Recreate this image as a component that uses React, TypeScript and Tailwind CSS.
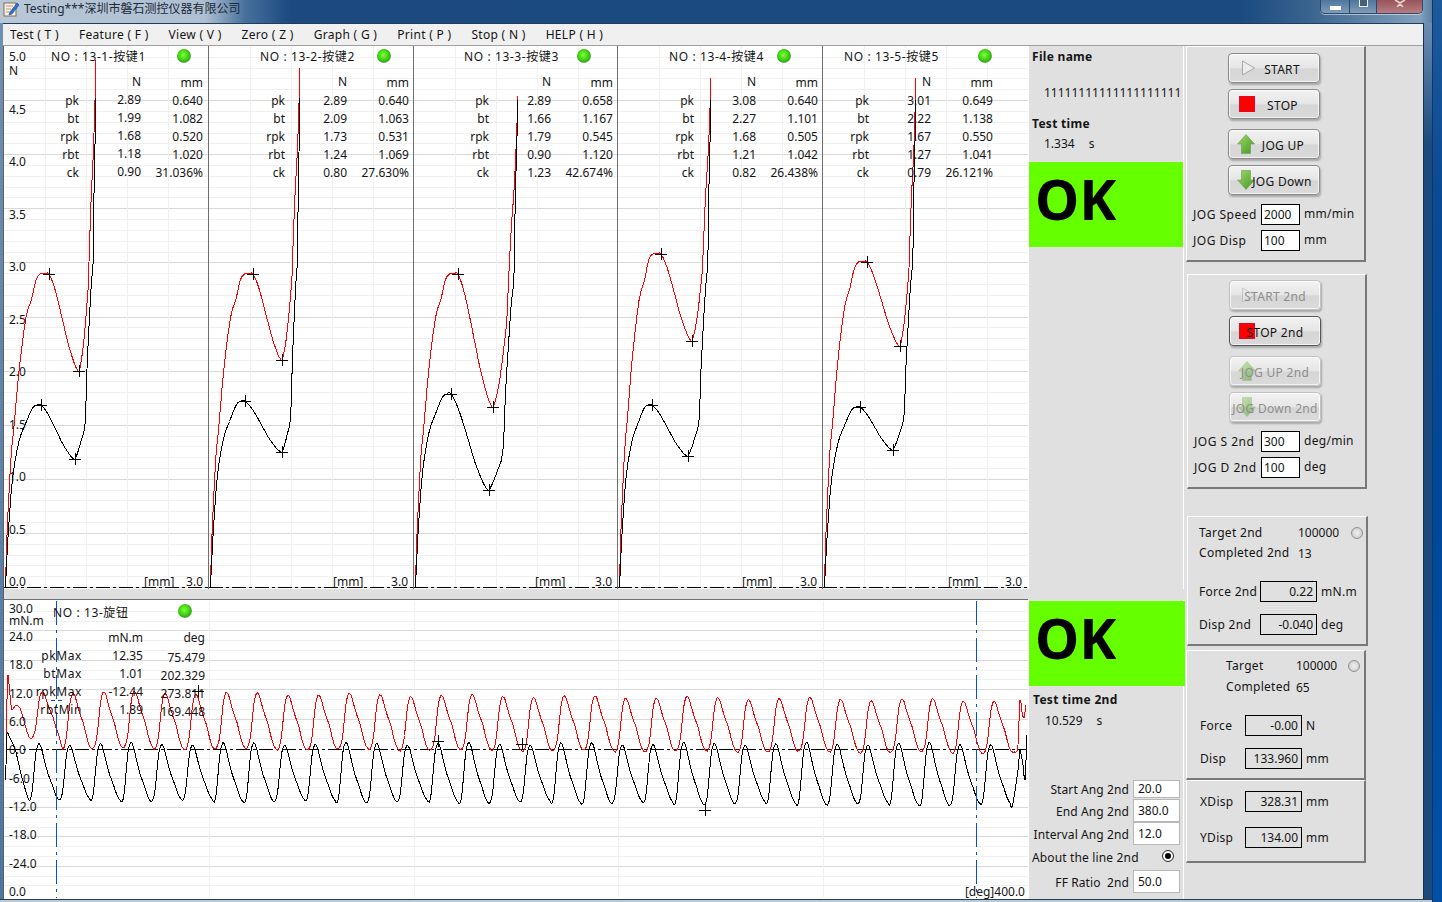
import React from 'react';

type Pt = [number, number];

// Catmull-Rom sampled to a polyline, the original trace looks stair-stepped so no need for beziers
function smooth(pts: Pt[], steps = 3): string {
  const out: string[] = [];
  for (let i = 0; i < pts.length - 1; i++) {
    const p0 = pts[Math.max(0, i - 1)];
    const p1 = pts[i];
    const p2 = pts[i + 1];
    const p3 = pts[Math.min(pts.length - 1, i + 2)];
    for (let s = 0; s < steps; s++) {
      const t = s / steps;
      const t2 = t * t;
      const t3 = t2 * t;
      const x = 0.5 * (2 * p1[0] + (p2[0] - p0[0]) * t + (2 * p0[0] - 5 * p1[0] + 4 * p2[0] - p3[0]) * t2 + (3 * p1[0] - p0[0] - 3 * p2[0] + p3[0]) * t3);
      const y = 0.5 * (2 * p1[1] + (p2[1] - p0[1]) * t + (2 * p0[1] - 5 * p1[1] + 4 * p2[1] - p3[1]) * t2 + (3 * p1[1] - p0[1] - 3 * p2[1] + p3[1]) * t3);
      out.push(`${x.toFixed(1)},${y.toFixed(1)}`);
    }
  }
  const last = pts[pts.length - 1];
  out.push(`${last[0]},${last[1]}`);
  return out.join(' ');
}

const BASE_Y = 587;

const fall: Pt[] = [[0.2, 0.16], [0.47, 0.5], [0.63, 0.71], [0.83, 0.91], [0.93, 0.98]];

function forceCurve(x0: number, pk: Pt, bt: Pt, top: Pt, rise: Pt[], climb: Pt[]): string {
  const pts: Pt[] = [];
  rise.forEach(([dx, f]) => pts.push([x0 + dx * (pk[0] - x0), BASE_Y - f * (BASE_Y - pk[1])]));
  fall.forEach(([t, e]) => pts.push([pk[0] + (bt[0] - pk[0]) * t, pk[1] + (bt[1] - pk[1]) * e]));
  pts.push(bt);
  climb.forEach(([fx, fy]) => pts.push([bt[0] + (top[0] - bt[0]) * fx, bt[1] + (top[1] - bt[1]) * fy]));
  return smooth(pts);
}

const redRise: Pt[] = [[0, 0], [0.03, 0.15], [0.08, 0.3], [0.13, 0.42], [0.2, 0.52], [0.31, 0.69], [0.47, 0.86], [0.6, 0.92], [0.7, 0.98], [0.8, 1], [0.9, 1], [1, 1]];
const redClimb: Pt[] = [[0.12, 0.03], [0.29, 0.1], [0.53, 0.26], [0.59, 0.35], [0.71, 0.55], [0.85, 0.71], [0.94, 0.87], [1, 1]];
const blackRise: Pt[] = [[0, 0], [0.03, 0.12], [0.08, 0.3], [0.2, 0.6], [0.38, 0.8], [0.55, 0.89], [0.75, 0.98], [0.88, 1], [1, 1]];
const blackClimb: Pt[] = [[0.14, 0.02], [0.29, 0.05], [0.48, 0.1], [0.57, 0.25], [0.76, 0.47], [0.86, 0.545], [0.9, 0.72], [1, 1]];

interface PanelData {
  left: number;
  width: number;
  title: string;
  titleX: string;
  ledX: string;
  nameW: string;
  mmX: string;
  rows: [string, string, string][];
  nShift?: boolean;
  redPk: Pt;
  redBt: Pt;
  redTop: Pt;
  blackPk: Pt;
  blackBt: Pt;
  blackTop: Pt;
}

const panels: PanelData[] = [
  {
    left: 4, width: 205, title: 'NO : 13-1-按键1', titleX: 'left-[47px]', ledX: 'left-[173px]', nameW: 'w-[75px]', mmX: 'left-[140px]', nShift: true,
    rows: [['pk', '2.89', '0.640'], ['bt', '1.99', '1.082'], ['rpk', '1.68', '0.520'], ['rbt', '1.18', '1.020'], ['ck', '0.90', '31.036%']],
    redPk: [49, 274], redBt: [79, 371], redTop: [96, 60], blackPk: [41, 405], blackBt: [75, 459], blackTop: [96, 98],
  },
  {
    left: 209, width: 205, title: 'NO : 13-2-按键2', titleX: 'left-[51px]', ledX: 'left-[168px]', nameW: 'w-[76px]', mmX: 'left-[124px]',
    rows: [['pk', '2.89', '0.640'], ['bt', '2.09', '1.063'], ['rpk', '1.73', '0.531'], ['rbt', '1.24', '1.069'], ['ck', '0.80', '27.630%']],
    redPk: [253, 274], redBt: [282, 360], redTop: [300, 68], blackPk: [245, 401], blackBt: [282, 452], blackTop: [300, 98],
  },
  {
    left: 414, width: 204, title: 'NO : 13-3-按键3', titleX: 'left-[50px]', ledX: 'left-[163px]', nameW: 'w-[75px]', mmX: 'left-[121px]',
    rows: [['pk', '2.89', '0.658'], ['bt', '1.66', '1.167'], ['rpk', '1.79', '0.545'], ['rbt', '0.90', '1.120'], ['ck', '1.23', '42.674%']],
    redPk: [458, 274], redBt: [493, 407], redTop: [518, 96], blackPk: [451, 394], blackBt: [489, 490], blackTop: [518, 100],
  },
  {
    left: 618, width: 205, title: 'NO : 13-4-按键4', titleX: 'left-[51px]', ledX: 'left-[159px]', nameW: 'w-[76px]', mmX: 'left-[124px]',
    rows: [['pk', '3.08', '0.640'], ['bt', '2.27', '1.101'], ['rpk', '1.68', '0.505'], ['rbt', '1.21', '1.042'], ['ck', '0.82', '26.438%']],
    redPk: [661, 254], redBt: [692, 341], redTop: [711, 78], blackPk: [652, 405], blackBt: [688, 456], blackTop: [711, 100],
  },
  {
    left: 823, width: 205, title: 'NO : 13-5-按键5', titleX: 'left-[21px]', ledX: 'left-[155px]', nameW: 'w-[46px]', mmX: 'left-[125px]',
    rows: [['pk', '3.01', '0.649'], ['bt', '2.22', '1.138'], ['rpk', '1.67', '0.550'], ['rbt', '1.27', '1.041'], ['ck', '0.79', '26.121%']],
    redPk: [867, 262], redBt: [900, 346], redTop: [916, 78], blackPk: [860, 407], blackBt: [893, 450], blackTop: [916, 100],
  },
];

const GRID_MAJOR = '#d9d9d9';
const GRID_MINOR = '#f0f0f0';

function Cross({ x, y }: { x: number; y: number }) {
  return <path d={`M${x - 6} ${y}H${x + 6}M${x} ${y - 6}V${y + 6}`} stroke="#000" fill="none" shapeRendering="crispEdges" />;
}

function Led({ className }: { className: string }) {
  return (
    <div className={`absolute h-[14px] w-[14px] rounded-full bg-[radial-gradient(circle_at_45%_42%,#7dff3c_0%,#3fd40f_45%,#3aa820_62%,#c4d0bc_85%,#ffffff_100%)] ${className}`} />
  );
}

function ForcePanel({ p }: { p: PanelData }) {
  const h: React.ReactNode[] = [];
  for (let i = 1; i <= 50; i++) {
    const y = Math.round(46 + i * 10.82) + 0.5;
    h.push(<line key={i} x1={p.left} x2={p.left + p.width} y1={y} y2={y} stroke={i % 5 === 0 ? GRID_MAJOR : GRID_MINOR} />);
  }
  const v = [1, 2, 3, 4].map((i) => (
    <line key={i} x1={p.left + i * 41 + 0.5} x2={p.left + i * 41 + 0.5} y1={46} y2={587} stroke={GRID_MINOR} />
  ));
  return (
    <div className="relative h-[543px] bg-white text-[12px] tracking-normal text-[#151515]" style={{ width: p.width }}>
      <svg className="absolute inset-0 h-full w-full" viewBox={`${p.left} 46 ${p.width} 543`} shapeRendering="crispEdges">
        {h}
        {v}
        <line x1={p.left} x2={p.left + p.width} y1={587.5} y2={587.5} stroke="#000" strokeDasharray="14 3 3 3" />
        <polyline points={forceCurve(p.left + 1.5, p.redPk, p.redBt, p.redTop, redRise, redClimb)} fill="none" stroke="#ff0000" />
        <polyline points={forceCurve(p.left + 1.5, p.blackPk, p.blackBt, p.blackTop, blackRise, blackClimb)} fill="none" stroke="#000" />
        <Cross x={p.redPk[0]} y={p.redPk[1]} />
        <Cross x={p.redBt[0]} y={p.redBt[1]} />
        <Cross x={p.blackPk[0]} y={p.blackPk[1]} />
        <Cross x={p.blackBt[0]} y={p.blackBt[1]} />
        {p.left < 823 && <line x1={p.left + p.width - 0.5} x2={p.left + p.width - 0.5} y1={46} y2={589} stroke="#6e6e6e" />}
      </svg>
      {p.left === 4 && (
        <div className="absolute left-[5px] top-[4px] flex flex-col">
          <div className="h-[52.5px] leading-[14px]">5.0<br />N</div>
          {['4.5', '4.0', '3.5', '3.0', '2.5', '2.0', '1.5', '1.0', '0.5', '0.0'].map((t) => (
            <div key={t} className="h-[52.5px] leading-[14px]">{t}</div>
          ))}
        </div>
      )}
      <div className={`absolute top-[3px] whitespace-nowrap leading-[16px] tracking-[0.6px] ${p.titleX}`}>{p.title}</div>
      <Led className={`top-[3px] ${p.ledX}`} />
      <div className="absolute left-0 top-[27px] flex leading-[18px]">
        <div className={`flex flex-col items-end ${p.nameW}`}>
          <div className="h-[19px]" />
          {p.rows.map((r) => <div key={r[0]}>{r[0]}</div>)}
        </div>
        <div className={`flex w-[62px] flex-col items-end ${p.nShift ? '-mt-[1px]' : ''}`}>
          <div className={`h-[19px] ${p.nShift ? 'mt-[1px] -mb-[1px]' : ''}`}>N</div>
          {p.rows.map((r) => <div key={r[0]}>{r[1]}</div>)}
        </div>
        <div className="flex w-[62px] flex-col items-end">
          <div className="h-[19px] pt-[1px]">mm</div>
          {p.rows.map((r) => <div key={r[0]}>{r[2]}</div>)}
        </div>
      </div>
      <div className={`absolute top-[528px] leading-[16px] ${p.mmX}`}>[mm]</div>
      <div className="absolute right-[6px] top-[528px] leading-[16px]">3.0</div>
    </div>
  );
}

// torque trace, one period per knob detent
const blackShape: Pt[] = [[0, 0], [2, 0.14], [4, 0.5], [6, 0.85], [8, 0.98], [9.5, 1], [11.5, 0.92], [14.5, 0.7], [18, 0.47], [22, 0.28], [25.5, 0.1], [28.5, 0.01]];
const redShape: Pt[] = [[0, 0], [3, 0.15], [5, 0.45], [7, 0.8], [9, 0.97], [10.5, 1], [12.5, 0.95], [15, 0.78], [18, 0.6], [21, 0.45], [24, 0.22], [27, 0.05]];

function buildWave(kind: 'red' | 'black'): string {
  const pts: Pt[] =
    kind === 'black'
      ? [[6, 780], [6, 765], [7, 734], [9, 736], [12, 742], [16, 752], [20, 770], [24, 785], [28, 798]]
      : [[6, 760], [7, 700], [8, 675], [10, 695], [12, 710], [15, 706], [20, 708], [25, 725], [29, 737]];
  const shape = kind === 'black' ? blackShape : redShape;
  for (let k = 0; k < 33; k++) {
    const t = (kind === 'black' ? 30 : 32) + 30.7 * k;
    const wob = Math.sin(k * 1.7) * 1.5;
    let peak: number;
    let trough: number;
    if (kind === 'black') {
      peak = 744 + wob;
      trough = 800 + (k / 32) * 5 - wob;
    } else {
      peak = 692 + (k / 32) * 9 + wob;
      trough = 748 + (k / 32) * 5 + wob * 0.8;
    }
    if (k === 0 && kind === 'red') trough = 738;
    if (k === 32) {
      pts.push([t, trough]);
      break;
    }
    shape.forEach(([dx, f]) => pts.push([t + dx, trough + (peak - trough) * f]));
  }
  if (kind === 'black') {
    pts.push([1018, 770], [1020, 750], [1023, 765], [1025, 780], [1027, 735]);
  } else {
    pts.push([1016, 752], [1018, 745], [1020, 700], [1022, 712], [1024, 718], [1026, 705]);
  }
  return smooth(pts, 2);
}

function TorqueChart() {
  const h: React.ReactNode[] = [];
  for (let i = 1; i < 30; i++) {
    const y = Math.round(601 + i * 9.81) + 0.5;
    if (i === 15) continue;
    h.push(<line key={i} x1={4} x2={1028} y1={y} y2={y} stroke={i % 3 === 0 ? GRID_MAJOR : GRID_MINOR} />);
  }
  const rows = [
    ['pkMax', '12.35', '75.479'],
    ['btMax', '1.01', '202.329'],
    ['rpkMax', '-12.44', '273.811'],
    ['rbtMin', '1.89', '169.448'],
  ];
  return (
    <div className="relative h-[299px] w-[1024px] bg-white text-[12px] tracking-normal text-[#151515]">
      <svg className="absolute inset-0 h-full w-full" viewBox="4 600 1024 299" shapeRendering="crispEdges">
        {h}
        {[209, 414, 618, 823].map((x) => (
          <line key={x} x1={x + 0.5} x2={x + 0.5} y1={601} y2={897} stroke={GRID_MINOR} />
        ))}
        <line x1={6} x2={1027} y1={749.5} y2={749.5} stroke="#000" strokeDasharray="14 3 3 3" />
        <polyline points={buildWave('red')} fill="none" stroke="#ff0000" />
        <polyline points={buildWave('black')} fill="none" stroke="#000" />
        {[56, 976].map((x) => (
          <line key={x} x1={x + 0.5} x2={x + 0.5} y1={601} y2={898} stroke="#0050e0" strokeDasharray="24 5 3 5" />
        ))}
        <line x1={51} x2={62} y1={700.5} y2={700.5} stroke="#0050e0" strokeDasharray="4 3" />
        <Cross x={198} y={691} />
        <Cross x={438} y={741} />
        <Cross x={522} y={744} />
        <Cross x={705} y={810} />
      </svg>
      <div className="absolute left-[5px] top-[3px] flex flex-col">
        <div className="h-[26px] leading-[12px]">30.0<br />mN.m</div>
        {['24.0', '18.0', '12.0', '6.0', '0.0', '-6.0', '-12.0', '-18.0', '-24.0', '0.0'].map((t, i) => (
          <div key={i} className="h-[28.33px] leading-[16px]">{t}</div>
        ))}
      </div>
      <div className="absolute left-[49px] top-[5px] whitespace-nowrap leading-[16px] tracking-[0.6px]">NO : 13-旋钮</div>
      <Led className="left-[174px] top-[4px]" />
      <div className="absolute left-0 top-[29px] flex leading-[18px]">
        <div className="flex w-[78px] flex-col items-end tracking-[0.6px]">
          <div className="h-[18px]" />
          {rows.map((r) => <div key={r[0]}>{r[0]}</div>)}
        </div>
        <div className="flex w-[61px] flex-col items-end">
          <div className="h-[18px]">mN.m</div>
          {rows.map((r) => <div key={r[0]}>{r[1]}</div>)}
        </div>
        <div className="flex w-[62px] flex-col items-end">
          <div className="h-[20px]">deg</div>
          {rows.map((r) => <div key={r[0]}>{r[2]}</div>)}
        </div>
      </div>
      <div className="absolute -bottom-[1px] right-[3px] whitespace-nowrap leading-[16px]">[deg]400.0</div>
    </div>
  );
}

type IconKind = 'play' | 'stop' | 'up' | 'down';

function BtnIcon({ kind, id }: { kind: IconKind; id: string }) {
  if (kind === 'stop') {
    return <div className="h-[16px] w-[16px] bg-[#ff0000] shadow-[inset_0_0_0_1px_#d01030]" />;
  }
  if (kind === 'play') {
    return (
      <svg width="15" height="16" viewBox="0 0 15 16" className="block">
        <path d="M1.5 1L13.5 8L1.5 15Z" fill="#ececec" stroke="#a8a8a8" />
      </svg>
    );
  }
  return (
    <svg width="18" height="20" viewBox="0 0 18 20" className="block">
      <defs>
        <linearGradient id={id} x1="0" y1="0" x2="1" y2="1">
          <stop offset="0" stopColor="#a2d86c" />
          <stop offset="1" stopColor="#3f9a1e" />
        </linearGradient>
      </defs>
      <path
        d={kind === 'up' ? 'M9 0.5L17.5 10H13.5V19.5H4.5V10H0.5Z' : 'M9 19.5L17.5 10H13.5V0.5H4.5V10H0.5Z'}
        fill={`url(#${id})`}
        stroke="#6f9a5a"
        strokeWidth="0.6"
      />
    </svg>
  );
}

function Btn({ label, icon, iconX, textPad, disabled, focus }: { label: string; icon: IconKind; iconX: string; textPad?: string; disabled?: boolean; focus?: boolean }) {
  return (
    <div
      className={`relative flex h-[30px] w-[92px] items-center justify-center whitespace-nowrap rounded-[4px] border bg-[linear-gradient(#f2f2f2_0%,#e6e6e6_48%,#d6d6d6_54%,#dadada_100%)] text-[12px] shadow-[inset_0_0_0_1px_rgba(255,255,255,0.7),1px_2px_2px_rgba(0,0,0,0.25)] ${textPad ?? ''} ${
        disabled ? 'border-[#c2c2c2] text-[#8e8e8e]' : focus ? 'border-[#555555] text-[#151515]' : 'border-[#8a8a8a] text-[#151515]'
      }`}
    >
      <div className={`absolute top-1/2 -translate-y-1/2 ${iconX} ${disabled ? 'opacity-50' : ''}`}>
        <BtnIcon kind={icon} id={`arrow-${label.replace(/ /g, '')}`} />
      </div>
      <span className="relative pt-[4px]">{label}</span>
    </div>
  );
}

function EntryRow({ label, value, unit, labelW, className }: { label: string; value: string; unit: string; labelW: string; className?: string }) {
  return (
    <div className={`flex h-[21px] items-center ${className ?? ''}`}>
      <div className={`whitespace-nowrap tracking-[0.5px] ${labelW}`}>{label}</div>
      <div className="flex h-[21px] w-[39px] items-center border border-black bg-white pl-[2px] tracking-normal">{value}</div>
      <div className="-mt-[2px] pl-[4px]">{unit}</div>
    </div>
  );
}

function ReadoutRow({ label, value, unit, labelW, className }: { label: string; value: string; unit: string; labelW: string; className?: string }) {
  return (
    <div className={`flex h-[21px] items-center ${className ?? ''}`}>
      <div className={`whitespace-nowrap ${labelW}`}>{label}</div>
      <div className="flex h-[21px] w-[57px] items-center justify-end border border-black pr-[3px] tracking-normal">{value}</div>
      <div className="pl-[4px]">{unit}</div>
    </div>
  );
}

function Radio({ checked }: { checked?: boolean }) {
  return (
    <div className={`flex h-[12px] w-[12px] items-center justify-center rounded-full border ${checked ? 'border-[#222222] bg-white' : 'border-[#909090] bg-[radial-gradient(circle,#f0f0f0,#c4c4c4)]'}`}>
      {checked && <div className="h-[6px] w-[6px] rounded-full bg-black" />}
    </div>
  );
}

function AngleRow({ label, value, h, className }: { label: string; value: string; h: string; className?: string }) {
  return (
    <div className={`flex items-center ${h} ${className ?? ''}`}>
      <div className="w-[100px] whitespace-pre pt-[2px] text-right tracking-[0.1px]">{label}</div>
      <div className={`ml-[4px] flex w-[47px] items-center border border-[#b8b8b8] bg-white pl-[4px] tracking-normal ${h}`}>{value}</div>
    </div>
  );
}

const OkBox = ({ className }: { className: string }) => (
  <div className={`flex h-[85px] items-center bg-[#66ff00] pb-[14px] pl-[6px] text-[56px] font-bold leading-none tracking-normal text-black ${className}`}>OK</div>
);

const GROUP = 'border border-r-2 border-b-2 border-l-white border-t-white border-r-[#787878] border-b-[#787878]';

const menus = ['Test ( T )', 'Feature ( F )', 'View ( V )', 'Zero ( Z )', 'Graph ( G )', 'Print ( P )', 'Stop ( N )', 'HELP ( H )'];

export default function App() {
  return (
    <div className="flex h-[902px] w-[1442px] overflow-hidden text-[12px] tracking-[0.3px] text-[#151515] [font-family:'Noto_Sans','Noto_Sans_CJK_SC',sans-serif]">
      <div className="flex w-[1432px] flex-col bg-[#1a4a80]">
        {/* title bar */}
        <div className="flex h-[23px] items-start justify-between bg-[linear-gradient(90deg,#b8c8d8_0px,#aebfd2_205px,#47709c_245px,#1c4a80_290px,#1a4a80_1240px,#3a648f_1310px,#84a0bc_1420px,#5d80a5_1432px)]">
          <div className="flex items-center pl-[3px] pt-[1px] tracking-normal">
            <svg width="16" height="16" viewBox="0 0 16 16">
              <rect x="1" y="2" width="12" height="13" fill="#f4f1e6" stroke="#8a6a50" />
              <path d="M3 5h7M3 8h5M3 11h4" stroke="#c09a78" />
              <path d="M14 2L7 11l-1 3 3-1 7-9z" fill="#2f74c8" stroke="#1c4a90" strokeWidth="0.6" />
            </svg>
            <span className="whitespace-nowrap pl-[5px] leading-[16px] text-[#1d2a38]">Testing***深圳市磐石测控仪器有限公司</span>
          </div>
          <div className="mr-[9px] flex h-[14px] w-[103px] overflow-hidden rounded-b-[5px] border border-t-0 border-[#2f4a68] shadow-[0_1px_0_rgba(255,255,255,0.5)]">
            <div className="flex w-[29px] items-end justify-center border-r border-[#2f4a68] bg-[linear-gradient(#4f769e,#7f9cb8)] pb-[3px]">
              <div className="h-[4px] w-[11px] bg-white" />
            </div>
            <div className="flex w-[27px] items-start justify-center border-r border-[#2f4a68] bg-[linear-gradient(#4f769e,#7f9cb8)]">
              <div className="h-[7px] w-[9px] border border-t-0 border-[#e8eef4] bg-[#4a5e74]" />
            </div>
            <div className="flex flex-1 items-start justify-center bg-[linear-gradient(#98555c,#b87c80)]">
              <svg width="12" height="7" viewBox="0 0 12 7"><path d="M1 0L6 3L11 0M3 7L6 4L9 7" stroke="#e8d0d0" strokeWidth="1.6" fill="none" /></svg>
            </div>
          </div>
        </div>

        <div className="flex flex-1">
          <div className="w-[3px] bg-[linear-gradient(#6f8fb0,#4a76a4)]" />
          <div className="flex w-[1420px] flex-col">
            {/* menu */}
            <div className="flex h-[23px] items-center gap-[20px] border-y border-t-[#1f3d5c] border-b-[#a0a0a0] bg-[#f0f0f0] pl-[7px]">
              {menus.map((m) => (
                <span key={m} className="whitespace-nowrap">{m}</span>
              ))}
            </div>

            {/* body */}
            <div className="flex flex-1 bg-[#e0e0e0]">
              {/* charts */}
              <div className="flex w-[1025px] flex-col border-l border-[#606060]">
                <div className="flex w-[1024px]">
                  {panels.map((p) => <ForcePanel key={p.left} p={p} />)}
                </div>
                <div className="h-[11px] border-b border-[#707070]" />
                <TorqueChart />
              </div>

              {/* results column */}
              <div className="flex w-[156px] flex-col">
                <div className="flex h-[543px] flex-col border-x border-white">
                  <div className="mt-[1px] flex h-[20px] items-center pl-[3px] font-bold">File name</div>
                  <div className="mt-[16px] flex h-[20px] items-center whitespace-nowrap pl-[15px] tracking-normal">11111111111111111111</div>
                  <div className="mt-[11px] flex h-[20px] items-center pl-[3px] font-bold">Test time</div>
                  <div className="flex h-[20px] items-center pl-[15px] tracking-normal">1.334<span className="pl-[14px]">s</span></div>
                  <OkBox className="mt-[8px]" />
                </div>
                <div className="mt-[11px] flex h-[299px] flex-col border-x border-white">
                  <OkBox className="mt-[1px] -mr-[2px]" />
                  <div className="mt-[4px] flex h-[20px] items-center pl-[4px] font-bold">Test time 2nd</div>
                  <div className="mt-[1px] flex h-[20px] items-center pl-[16px] tracking-normal">10.529<span className="pl-[14px]">s</span></div>
                  <div className="mt-[49px] flex flex-col">
                    <AngleRow label="Start Ang 2nd" value="20.0" h="h-[18px]" />
                    <AngleRow label="End Ang 2nd" value="380.0" h="h-[23px]" className="mt-[1px]" />
                    <AngleRow label="Interval Ang 2nd" value="12.0" h="h-[23px]" />
                    <div className="flex h-[25px] items-center pl-[3px]">
                      <span className="whitespace-nowrap tracking-[0.15px]">About the line 2nd</span>
                      <div className="-mt-[3px] ml-[23px]"><Radio checked /></div>
                    </div>
                    <AngleRow label="FF Ratio  2nd" value="50.0" h="h-[23px]" />
                  </div>
                </div>
              </div>

              {/* control column */}
              <div className="ml-[2px] flex flex-col">
                <div className={`${GROUP} h-[216px] w-[180px]`}>
                  <div className="ml-[41px] mt-[6px] flex flex-col">
                    <Btn label="START" icon="play" iconX="left-[12px]" textPad="pl-[16px]" />
                    <Btn label="STOP" icon="stop" iconX="left-[10px]" textPad="mt-[6px] pl-[17px]" />
                    <Btn label="JOG UP" icon="up" iconX="left-[8px]" textPad="mt-[10px] pl-[18px]" />
                    <Btn label="JOG Down" icon="down" iconX="left-[8px]" textPad="mt-[6px] pl-[16px]" />
                  </div>
                  <EntryRow label="JOG Speed" value="2000" unit="mm/min" labelW="w-[68px]" className="ml-[6px] mt-[9px]" />
                  <EntryRow label="JOG Disp" value="100" unit="mm" labelW="w-[68px]" className="ml-[6px] mt-[5px]" />
                </div>
                <div className={`${GROUP} ml-[1px] mt-[12px] h-[215px] w-[180px]`}>
                  <div className="ml-[41px] mt-[5px] flex flex-col">
                    <Btn label="START 2nd" icon="play" iconX="left-[11px]" disabled />
                    <Btn label="STOP 2nd" icon="stop" iconX="left-[9px]" textPad="mt-[6px]" focus />
                    <Btn label="JOG UP 2nd" icon="up" iconX="left-[8px]" textPad="mt-[10px]" disabled />
                    <Btn label="JOG Down 2nd" icon="down" iconX="left-[8px]" textPad="mt-[6px]" disabled />
                  </div>
                  <EntryRow label="JOG S 2nd" value="300" unit="deg/min" labelW="w-[67px]" className="ml-[6px] mt-[9px]" />
                  <EntryRow label="JOG D 2nd" value="100" unit="deg" labelW="w-[67px]" className="ml-[6px] mt-[5px]" />
                </div>
                <div className={`${GROUP} ml-[1px] mt-[27px] h-[130px] w-[181px]`}>
                  <div className="mt-[6px] flex h-[20px] items-center pl-[11px]">
                    <span className="w-[99px]">Target 2nd</span>
                    <span className="w-[53px] tracking-normal">100000</span>
                    <Radio />
                  </div>
                  <div className="flex h-[20px] items-center pl-[11px]">
                    <span className="w-[99px]">Completed 2nd</span>
                    <span className="pt-[2px] tracking-normal">13</span>
                  </div>
                  <ReadoutRow label="Force 2nd" value="0.22" unit="mN.m" labelW="w-[61px]" className="ml-[11px] mt-[18px]" />
                  <ReadoutRow label="Disp 2nd" value="-0.040" unit="deg" labelW="w-[61px]" className="ml-[11px] mt-[12px]" />
                </div>
                <div className={`${GROUP} mt-[4px] h-[130px] w-[180px]`}>
                  <div className="mt-[5px] flex h-[20px] items-center pl-[39px]">
                    <span className="w-[70px]">Target</span>
                    <span className="w-[52px] tracking-normal">100000</span>
                    <Radio />
                  </div>
                  <div className="mt-[1px] flex h-[20px] items-center pl-[39px]">
                    <span className="w-[70px]">Completed</span>
                    <span className="pt-[2px] tracking-normal">65</span>
                  </div>
                  <ReadoutRow label="Force" value="-0.00" unit="N" labelW="w-[45px]" className="ml-[13px] mt-[18px]" />
                  <ReadoutRow label="Disp" value="133.960" unit="mm" labelW="w-[45px]" className="ml-[13px] mt-[12px]" />
                </div>
                <div className={`${GROUP} h-[83px] w-[180px]`}>
                  <ReadoutRow label="XDisp" value="328.31" unit="mm" labelW="w-[45px]" className="ml-[13px] mt-[10px]" />
                  <ReadoutRow label="YDisp" value="134.00" unit="mm" labelW="w-[45px]" className="ml-[13px] mt-[15px]" />
                </div>
              </div>
            </div>
          </div>
          <div className="w-[9px] border-l border-[#16304e] bg-[linear-gradient(#6c8eb2,#1b4a7e_120px,#1b4a7e)]" />
        </div>
        <div className="h-[3px] border-t border-[#2a3f55] bg-[#b8cad8]" />
      </div>
      <div className="w-[10px] border-l border-[#12365e] bg-[linear-gradient(#1d5a9c,#0a4a94_200px,#00479a_500px,#0050a8)]" />
    </div>
  );
}
